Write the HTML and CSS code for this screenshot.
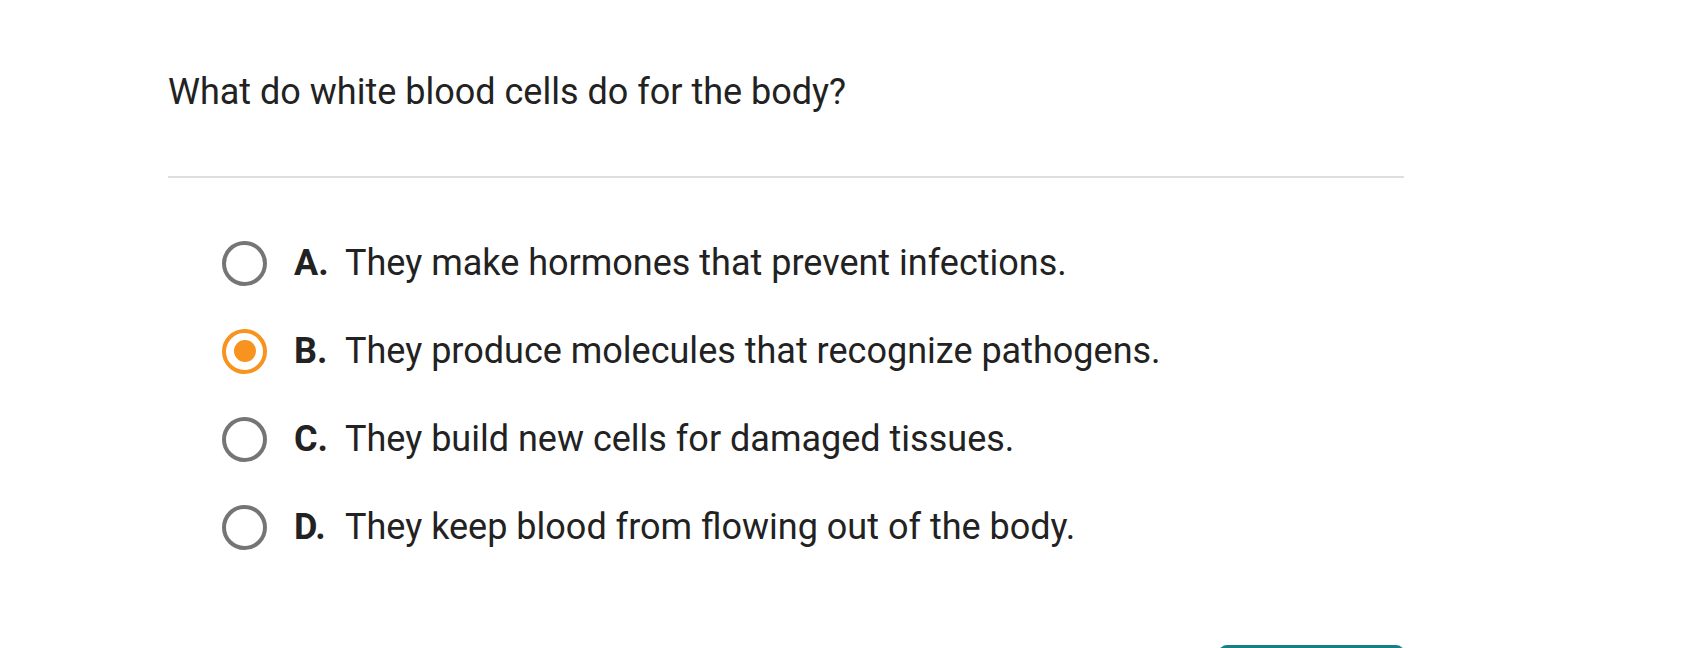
FILE: index.html
```html
<!DOCTYPE html>
<html lang="en">
<head>
<meta charset="utf-8">
<title>Question</title>
<link rel="stylesheet" href="styles.css">
</head>
<body>
<main class="page">
  <h1 class="question">What do white blood cells do for the body?</h1>
  <div class="divider"></div>
  <ul class="options">
    <li class="option"><span class="radio"></span><span class="letter">A.</span><span class="text">They make hormones that prevent infections.</span></li>
    <li class="option selected"><span class="radio"></span><span class="letter">B.</span><span class="text">They produce molecules that recognize pathogens.</span></li>
    <li class="option"><span class="radio"></span><span class="letter">C.</span><span class="text">They build new cells for damaged tissues.</span></li>
    <li class="option"><span class="radio"></span><span class="letter">D.</span><span class="text">They keep blood from flowing out of the body.</span></li>
  </ul>
  <div class="footer"><button class="submit" type="button" aria-label="Submit"></button></div>
</main>
</body>
</html>
```
FILE: styles.css
```css
html, body {
  margin: 0;
  background: #ffffff;
  overflow: hidden;
}
body {
  font-family: Roboto, "Liberation Sans", sans-serif;
  color: #222222;
}
.page {
  width: 1236px;
  padding: 70px 0 0 168px;
}
.question {
  margin: 0;
  font-size: 36px;
  line-height: 44px;
  font-weight: 400;
  color: #222222;
}
.divider {
  margin-top: 62px;
  height: 2px;
  background: #dedede;
}
.options {
  list-style: none;
  margin: 41px 0 0 0;
  padding: 0 0 0 54px;
}
.option {
  display: flex;
  align-items: center;
  height: 88px;
  font-size: 36px;
}
.radio {
  box-sizing: border-box;
  width: 45px;
  height: 45px;
  border: 4px solid #757575;
  border-radius: 50%;
  display: flex;
  align-items: center;
  justify-content: center;
  flex: none;
}
.selected .radio {
  border-color: #f7931e;
}
.selected .radio::after {
  content: "";
  width: 22px;
  height: 22px;
  border-radius: 50%;
  background: #f7931e;
}
.letter {
  font-weight: 700;
  margin-left: 27px;
  width: 51px;
  flex: none;
}
.footer {
  display: flex;
  justify-content: flex-end;
  margin-top: 74px;
}
.submit {
  width: 185px;
  height: 50px;
  border: none;
  border-radius: 8px;
  background: #16808a;
}
```
